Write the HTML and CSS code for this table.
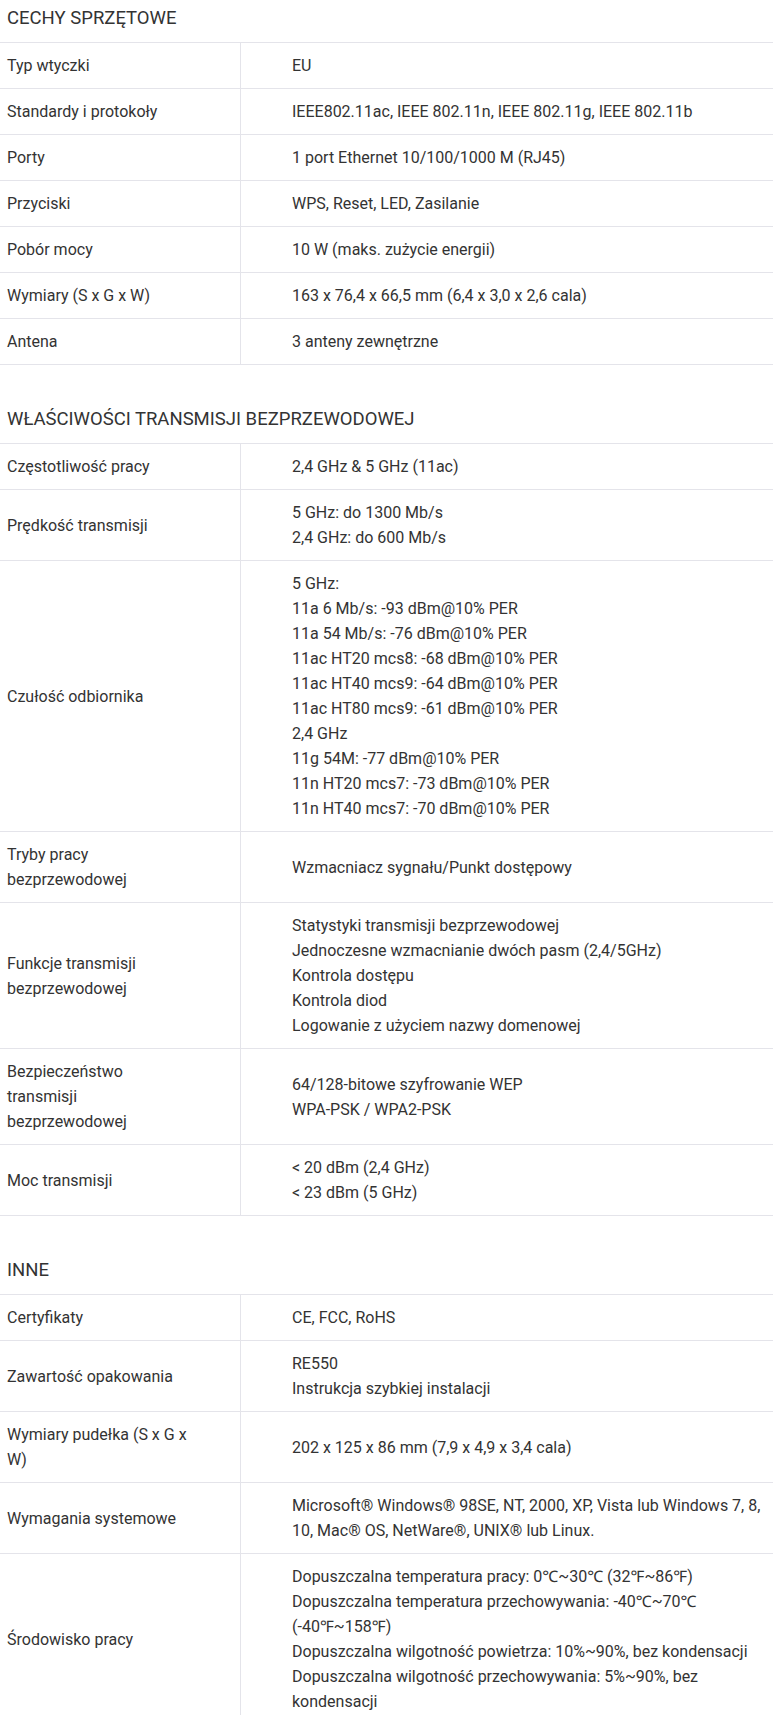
FILE: index.html
```html
<!DOCTYPE html>
<html lang="pl">
<head>
<meta charset="utf-8">
<title>Specyfikacja</title>
<link rel="stylesheet" href="styles.css">
</head>
<body>
<section class="spec">
  <h3 class="spec-title">CECHY SPRZĘTOWE</h3>
  <table class="spec-table">
    <tr><td class="k">Typ wtyczki</td><td class="v">EU</td></tr>
    <tr><td class="k">Standardy i protokoły</td><td class="v">IEEE802.11ac, IEEE 802.11n, IEEE 802.11g, IEEE 802.11b</td></tr>
    <tr><td class="k">Porty</td><td class="v">1 port Ethernet 10/100/1000 M (RJ45)</td></tr>
    <tr><td class="k">Przyciski</td><td class="v">WPS, Reset, LED, Zasilanie</td></tr>
    <tr><td class="k">Pobór mocy</td><td class="v">10 W (maks. zużycie energii)</td></tr>
    <tr><td class="k">Wymiary (S x G x W)</td><td class="v">163 x 76,4 x 66,5 mm (6,4 x 3,0 x 2,6 cala)</td></tr>
    <tr><td class="k">Antena</td><td class="v">3 anteny zewnętrzne</td></tr>
  </table>
</section>
<section class="spec">
  <h3 class="spec-title">WŁAŚCIWOŚCI TRANSMISJI BEZPRZEWODOWEJ</h3>
  <table class="spec-table">
    <tr><td class="k">Częstotliwość pracy</td><td class="v">2,4 GHz &amp; 5 GHz (11ac)</td></tr>
    <tr><td class="k">Prędkość transmisji</td><td class="v">5 GHz: do 1300 Mb/s<br>2,4 GHz: do 600 Mb/s</td></tr>
    <tr><td class="k">Czułość odbiornika</td><td class="v">5 GHz:<br>11a 6 Mb/s: -93 dBm@10% PER<br>11a 54 Mb/s: -76 dBm@10% PER<br>11ac HT20 mcs8: -68 dBm@10% PER<br>11ac HT40 mcs9: -64 dBm@10% PER<br>11ac HT80 mcs9: -61 dBm@10% PER<br>2,4 GHz<br>11g 54M: -77 dBm@10% PER<br>11n HT20 mcs7: -73 dBm@10% PER<br>11n HT40 mcs7: -70 dBm@10% PER</td></tr>
    <tr><td class="k">Tryby pracy bezprzewodowej</td><td class="v">Wzmacniacz sygnału/Punkt dostępowy</td></tr>
    <tr><td class="k">Funkcje transmisji bezprzewodowej</td><td class="v">Statystyki transmisji bezprzewodowej<br>Jednoczesne wzmacnianie dwóch pasm (2,4/5GHz)<br>Kontrola dostępu<br>Kontrola diod<br>Logowanie z użyciem nazwy domenowej</td></tr>
    <tr><td class="k">Bezpieczeństwo transmisji bezprzewodowej</td><td class="v">64/128-bitowe szyfrowanie WEP<br>WPA-PSK / WPA2-PSK</td></tr>
    <tr><td class="k">Moc transmisji</td><td class="v">&lt; 20 dBm (2,4 GHz)<br>&lt; 23 dBm (5 GHz)</td></tr>
  </table>
</section>
<section class="spec">
  <h3 class="spec-title">INNE</h3>
  <table class="spec-table">
    <tr><td class="k">Certyfikaty</td><td class="v">CE, FCC, RoHS</td></tr>
    <tr><td class="k">Zawartość opakowania</td><td class="v">RE550<br>Instrukcja szybkiej instalacji</td></tr>
    <tr><td class="k">Wymiary pudełka (S x G x W)</td><td class="v">202 x 125 x 86 mm (7,9 x 4,9 x 3,4 cala)</td></tr>
    <tr><td class="k">Wymagania systemowe</td><td class="v">Microsoft® Windows® 98SE, NT, 2000, XP, Vista lub Windows 7, 8, 10, Mac® OS, NetWare®, UNIX® lub Linux.</td></tr>
    <tr><td class="k">Środowisko pracy</td><td class="v">Dopuszczalna temperatura pracy: 0℃~30℃ (32℉~86℉)<br>Dopuszczalna temperatura przechowywania: -40℃~70℃ (-40℉~158℉)<br>Dopuszczalna wilgotność powietrza: 10%~90%, bez kondensacji<br>Dopuszczalna wilgotność przechowywania: 5%~90%, bez kondensacji</td></tr>
  </table>
</section>
</body>
</html>
```

FILE: styles.css
```css
html, body {
  margin: 0;
  padding: 0;
  background: #fff;
}
body {
  font-family: Roboto, "Noto Sans", "Liberation Sans", sans-serif;
  color: #333;
}
.spec + .spec {
  margin-top: 36px;
}
.spec-title {
  margin: 0;
  padding: 0 7px 5px;
  font-size: 18.5px;
  font-weight: 400;
  line-height: 37px;
  color: #333;
}
.spec-table {
  width: 100%;
  table-layout: fixed;
  border-collapse: separate;
  border-spacing: 0;
  border-top: 1px solid #e4e4ea;
  font-size: 16px;
  line-height: 25px;
}
.spec-table td {
  box-sizing: border-box;
  vertical-align: middle;
  padding: 10px 0;
  border-bottom: 1px solid #e4e4ea;
}
.spec-table td.k {
  width: 241px;
  padding-left: 7px;
  padding-right: 48px;
  border-right: 1px solid #e4e4ea;
}
.spec-table td.v {
  padding-left: 51px;
  padding-right: 8px;
}
```
